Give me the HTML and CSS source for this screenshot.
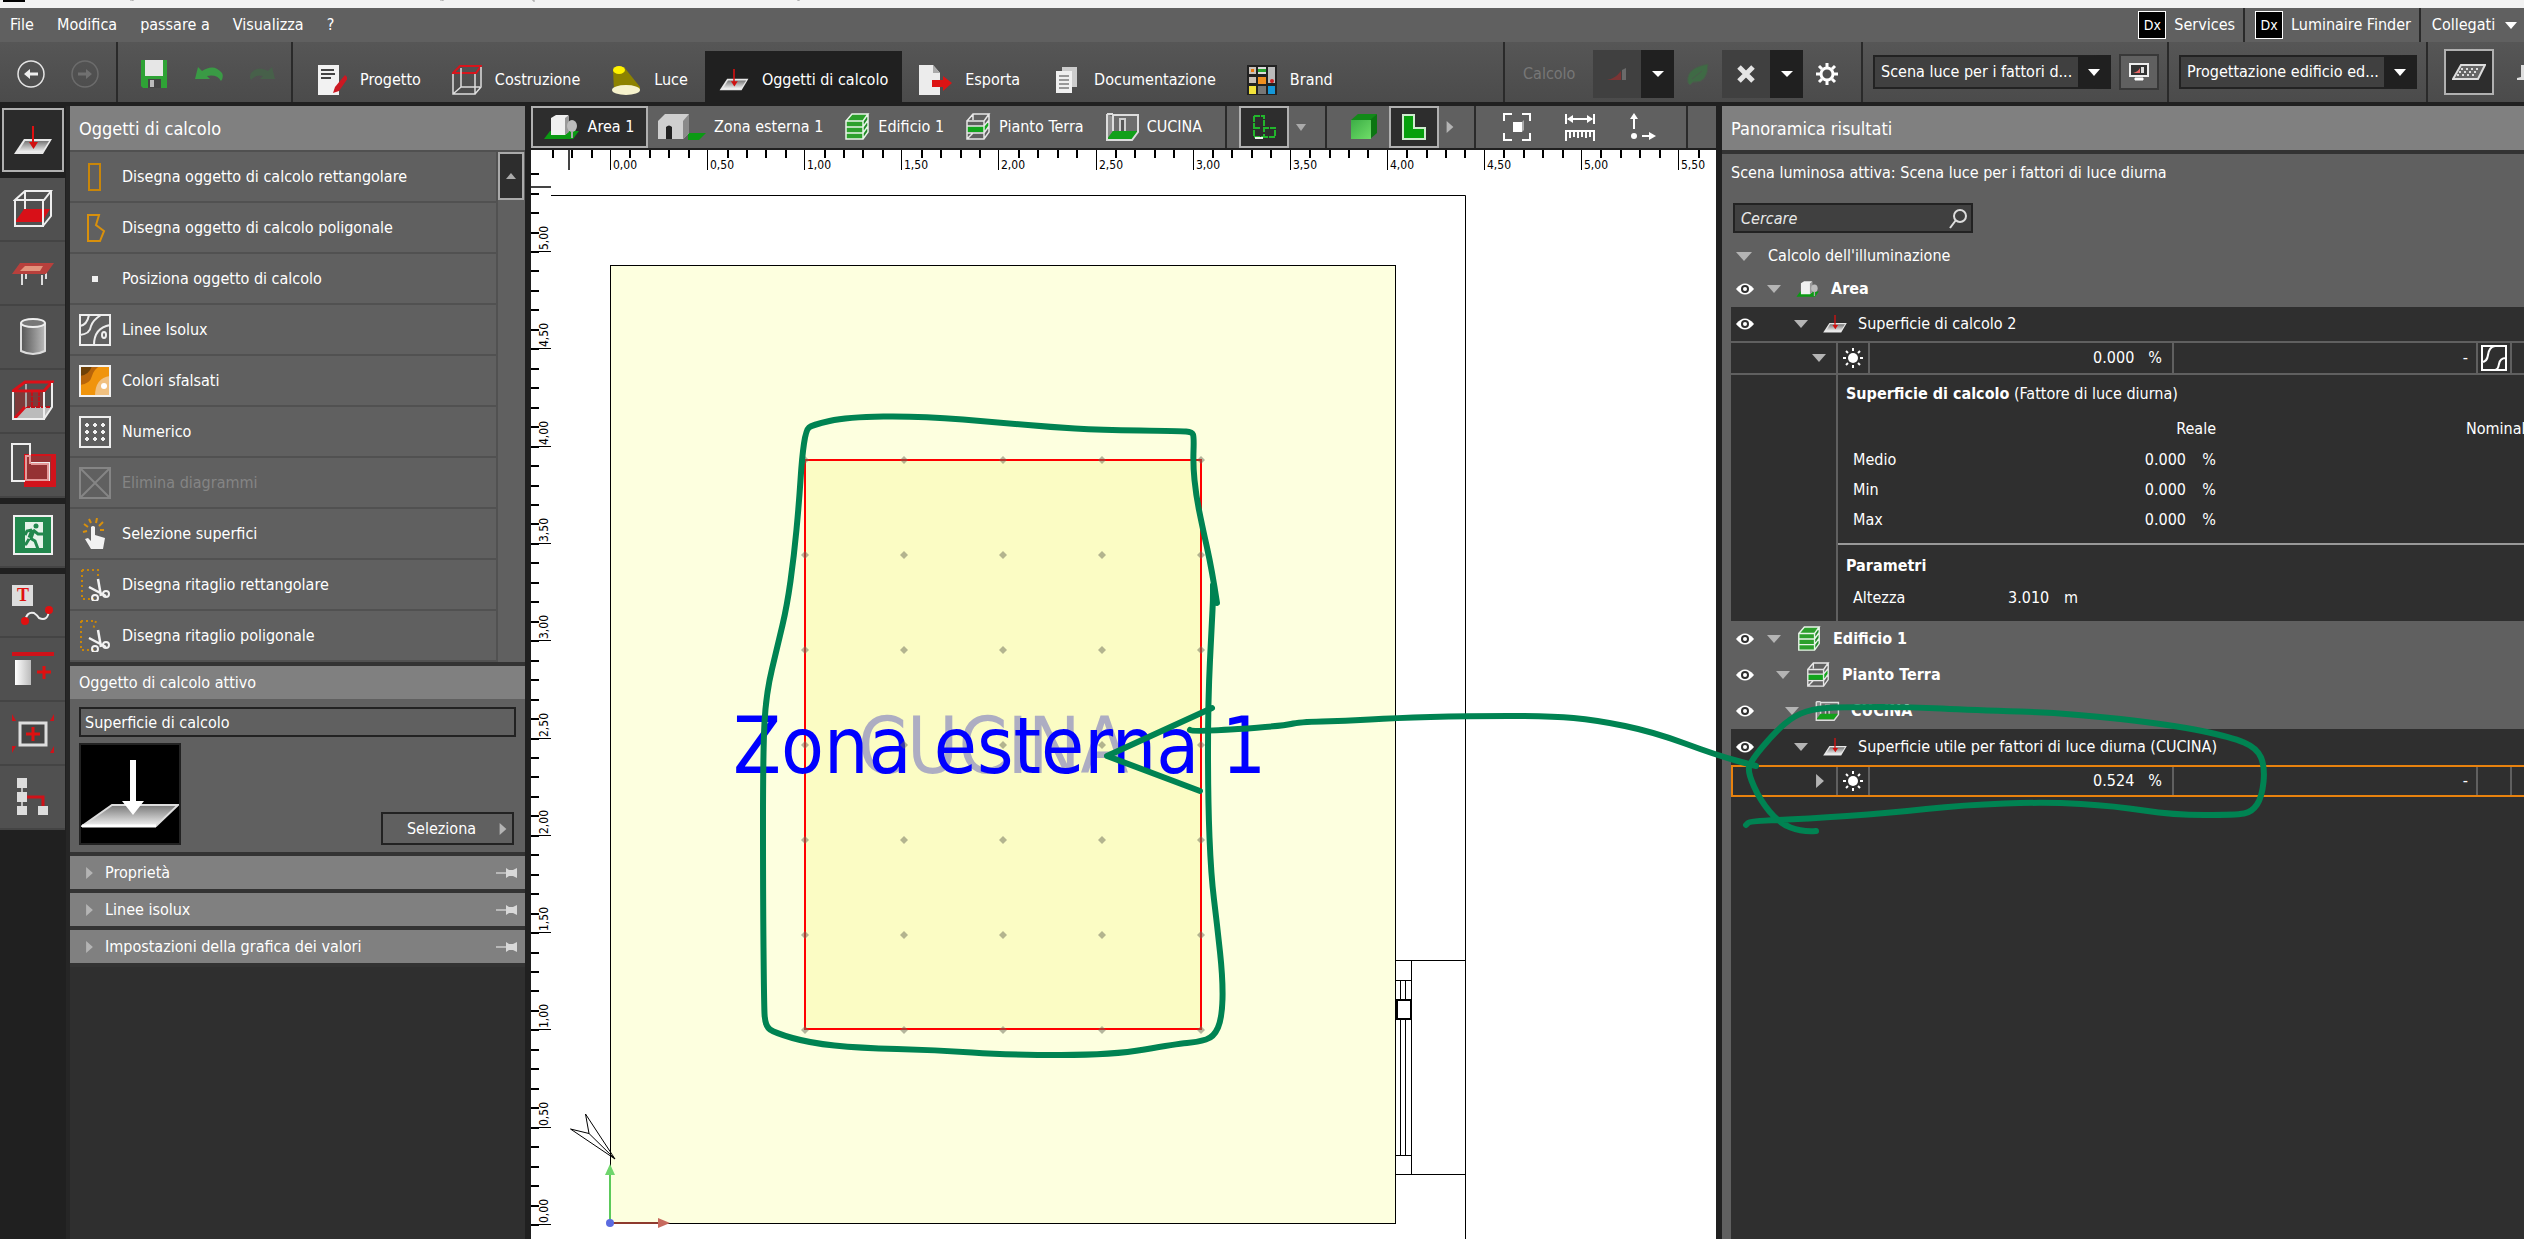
FILE: index.html
```html
<!DOCTYPE html>
<html lang="it">
<head>
<meta charset="utf-8">
<title>Oggetti di calcolo</title>
<link rel="stylesheet" href="styles.css">
</head>
<body>
<svg class="defs" aria-hidden="true">
  <defs>
    <linearGradient id="gPlate" x1="0" y1="0" x2="0" y2="1"><stop offset="0" stop-color="#777"/><stop offset="1" stop-color="#f2f2f2"/></linearGradient>
    <linearGradient id="gLight" x1="0" y1="0" x2="1" y2="0"><stop offset="0" stop-color="#fff"/><stop offset="1" stop-color="#bbb"/></linearGradient>
    <linearGradient id="gCyl" x1="0" y1="0" x2="1" y2="0"><stop offset="0" stop-color="#555"/><stop offset="1" stop-color="#bbb"/></linearGradient>
    <linearGradient id="gGreen" x1="0" y1="0" x2="1" y2="1"><stop offset="0" stop-color="#3cae46"/><stop offset="1" stop-color="#6fdd68"/></linearGradient>
    <symbol id="plate" viewBox="0 0 38 29"><path d="M10 13h28l-9 15H0z" fill="#e8e8e8"/><path d="M11 15h24l-7 11H4z" fill="url(#gPlate)"/><path d="M19 0v18" stroke="#e01010" stroke-width="2"/><path d="M15 16h9l-4.500 7z" fill="#d01010"/></symbol>
    <symbol id="floors" viewBox="0 0 26 28"><path d="M2 8l6-7h16l-5 7v18H2z" fill="#2ca02c"/><path d="M19 8l5-7v18l-5 7z" fill="#1f8a26"/><path d="M2 8l6-7h16l-5 7H2v18h17l5-7V1M19 8v18M2 14h17l5-7M2 20h17l5-7" fill="none" stroke="#e8f4e8" stroke-width="1.500"/></symbol>
    <symbol id="floor" viewBox="0 0 26 28"><path d="M2 13h17l5-6v6l-5 6H2z" fill="#12a51c"/><path d="M2 8l6-7h16l-5 7H2v18h17l5-7V1M19 8v18M2 13h17l5-6M2 20h17l5-7M8 1v6M2 26l6-6" fill="none" stroke="#e6e6e6" stroke-width="1.500"/></symbol>
    <symbol id="room" viewBox="0 0 34 28"><path d="M8 3h25v16H8z" fill="#6d6d6d"/><path d="M2 1l6 3v15l-6 7z" fill="#8e8e8e"/><path d="M14 5h7v14h-7z" fill="#cfcfcf"/><path d="M16 7h3v12h-3z" fill="#555"/><path d="M8 18h25l-6 8H2z" fill="#12a01a"/><path d="M2 1v26h25l6-8V2H8v16M2 1h6" fill="none" stroke="#ddd" stroke-width="2"/></symbol>
    <symbol id="site" viewBox="0 0 36 28"><path d="M6 18h29l-6 8H0z" fill="#0b9a13"/><path d="M7 5l5-3h12v17l-3 3H7z" fill="#f0f0f0"/><path d="M21 5l4-3v17l-4 3z" fill="#999"/><ellipse cx="28" cy="13" rx="5" ry="6" fill="#bcbcbc"/><path d="M28 18v7" stroke="#aaa" stroke-width="2"/></symbol>
    <symbol id="eye" viewBox="0 0 18 12"><path d="M0 6Q9-5 18 6Q9 17 0 6z" fill="#fff"/><circle cx="9" cy="6" r="4" fill="#2f2f2f"/><circle cx="9" cy="6" r="2" fill="#fff"/></symbol>
    <symbol id="down" viewBox="0 0 16 9"><path d="M0 0h16l-8 9z" fill="#b4b4b4"/></symbol>
    <symbol id="right" viewBox="0 0 9 16"><path d="M0 0v16l9-8z" fill="#b4b4b4"/></symbol>
    <symbol id="sun" viewBox="0 0 20 20"><circle cx="10" cy="10" r="5" fill="#fff"/><path d="M10 0v3M10 17v3M0 10h3M17 10h3M3 3l2 2M15 15l2 2M17 3l-2 2M5 15l-2 2" stroke="#fff" stroke-width="2"/></symbol>
    <symbol id="pin" viewBox="0 0 22 12"><path d="M0 6h10" stroke="#b8b8b8" stroke-width="2"/><path d="M10 1l3 2h4l4-2v10l-4-2h-4l-3 2z" fill="#d8d8d8"/></symbol>
    <symbol id="scissors" viewBox="0 0 24 26"><path d="M11 2l3 17M2 10l17 9" stroke="#f2f2f2" stroke-width="2.500"/><circle cx="8" cy="21" r="3" fill="none" stroke="#f2f2f2" stroke-width="2"/><circle cx="19" cy="17" r="3" fill="none" stroke="#f2f2f2" stroke-width="2"/></symbol>
  </defs>
</svg>

<div class="titlebar"><svg width="900" height="4"><path d="M3 0h22v2H3z" fill="#000"/><path d="M130 0h3v1M440 0h3v1M532 0h2v2M797 0h2v1" stroke="#999" fill="none"/></svg></div>

<header class="menubar">
  <nav class="menus"><button>File</button><button>Modifica</button><button>passare a</button><button>Visualizza</button><button>?</button></nav>
  <a class="service" href="#"><span class="dx">Dx</span>Services</a>
  <a class="service finder" href="#"><span class="dx">Dx</span>Luminaire Finder</a>
  <button class="account">Collegati <svg width="12" height="7"><path d="M0 0h12l-6 7z" fill="#fff"/></svg></button>
</header>

<div class="toolbar">
  <div class="group history">
    <button aria-label="Indietro"><svg width="28" height="28"><circle cx="14" cy="14" r="13" fill="none" stroke="#e4e4e4" stroke-width="1.500"/><path d="M7 14l6-5v3.500h8v3h-8V19z" fill="#eee"/></svg></button>
    <button aria-label="Avanti" disabled><svg width="28" height="28"><circle cx="14" cy="14" r="13" fill="none" stroke="#6c6c6c" stroke-width="1.500"/><path d="M21 14l-6-5v3.500H7v3h8V19z" fill="#707070"/></svg></button>
  </div>
  <div class="group edit">
    <button aria-label="Salva"><svg width="28" height="28"><path d="M1 0h26v28H3l-2-2z" fill="#2fa336"/><path d="M5 0h18v16H5z" fill="#e6e6e6"/><path d="M8 19h13v9H8z" fill="#444"/><path d="M10 20h4v7h-4z" fill="#bbb"/></svg></button>
    <button aria-label="Annulla"><svg width="30" height="18"><path d="M1 14L4 2l4 4q12-8 20 2 2 4-1 8-4-7-14-5l3 3z" fill="#3a9a45"/></svg></button>
    <button aria-label="Ripeti" disabled><svg width="26" height="18"><path d="M25 14L22 2l-4 4Q8 0 1 8q-2 4 0 7 5-6 12-4l-3 3z" fill="#47604a"/></svg></button>
  </div>
  <nav class="tabs">
    <button><svg width="30" height="30"><path d="M1 0h21v30H1z" fill="#f2f2f2"/><path d="M4 5h13M4 9h14M4 13h10" stroke="#444" stroke-width="2"/><path d="M28 10l3 3-9 13-6 2 2-6z" fill="#cc1822"/></svg>Progetto</button>
    <button><svg width="30" height="30"><path d="M1 8l7-7h21l-5 7z" fill="none" stroke="#d8141c" stroke-width="2"/><path d="M1 9v20h22V9M29 2v20l-6 7M9 3v19h19M1 29l8-7" fill="none" stroke="#ddd" stroke-width="1.500"/></svg>Costruzione</button>
    <button><svg width="30" height="30"><path d="M2 5l11-3 16 20v3H3z" fill="#8d8200"/><ellipse cx="8" cy="5" rx="6" ry="4" fill="#fff200"/><ellipse cx="15" cy="25" rx="14" ry="5" fill="#f6f2cc"/></svg>Luce</button>
    <button class="on"><svg width="30" height="22"><use href="#plate"/></svg>Oggetti di calcolo</button>
    <button><svg width="33" height="30"><path d="M0 0h14l7 8v22H0z" fill="#ececec"/><path d="M14 0v8h7z" fill="#aaa"/><path d="M13 15h11v-4l9 7-9 8v-4H13z" fill="#dd1414"/></svg>Esporta</button>
    <button><svg width="30" height="30"><path d="M11 2h15v20H11z" fill="#ccc"/><path d="M5 6h16v22H5z" fill="#f0f0f0"/><path d="M8 11h10M8 15h10M8 19h10M8 23h10" stroke="#999" stroke-width="2"/></svg>Documentazione</button>
    <button><svg width="30" height="30"><path d="M0 0h30v30H0z" fill="#222"/><path d="M2 2h7v7H2zM2 12h7v6H2z" fill="#c9c0b8"/><path d="M4 4h3v3H4z" fill="#e87a10"/><path d="M11 2h8v7h-8z" fill="#ddd"/><path d="M11 4h8v3h-8z" fill="#27a530"/><path d="M21 2h7v16h-7z" fill="#bbb"/><path d="M11 12h8v7h-8z" fill="#f09020"/><circle cx="25" cy="16" r="2" fill="#c22"/><path d="M2 21h7v8H2z" fill="#f2e23a"/><path d="M11 21h8v8h-8z" fill="#777"/><path d="M21 21h7v8h-7z" fill="#1597d8"/></svg>Brand</button>
  </nav>
  <div class="group calc">
    <span class="off">Calcolo</span>
    <div class="split"><button aria-label="Avvia calcolo" disabled><svg width="20" height="12"><path d="M0 12q8-1 14-9v9z" fill="#7c3434"/><path d="M15 2l4-2v12h-4z" fill="#6a6a6a"/></svg></button><button class="drop" aria-label="Opzioni di calcolo"><svg width="12" height="6"><path d="M0 0h12l-6 6z" fill="#fff"/></svg></button></div>
    <button class="plain leaf" aria-label="Energia"><svg width="22" height="22"><path d="M1 20Q-2 5 21 1q0 20-15 18l-3 3zM5 16l10-8" fill="#3f6a45" stroke="#4b5a4c"/></svg></button>
    <div class="split"><button aria-label="Elimina risultati"><svg width="20" height="20"><path d="M3 3l14 14M17 3L3 17" stroke="#e4e4e4" stroke-width="5"/></svg></button><button class="drop" aria-label="Opzioni di eliminazione"><svg width="12" height="6"><path d="M0 0h12l-6 6z" fill="#fff"/></svg></button></div>
    <button class="plain gear" aria-label="Impostazioni"><svg width="22" height="22"><circle cx="11" cy="11" r="6" fill="none" stroke="#fff" stroke-width="3"/><path d="M11 0v4M11 18v4M0 11h4M18 11h4M3 3l3 3M16 16l3 3M19 3l-3 3M6 16l-3 3" stroke="#fff" stroke-width="3"/></svg></button>
  </div>
  <div class="group scene">
    <div class="combo"><select aria-label="Scena luce"><option>Scena luce per i fattori d...</option></select><svg width="12" height="7"><path d="M0 0h12l-6 7z" fill="#fff"/></svg></div>
    <button class="monitor" aria-label="Mostra risultati"><svg width="20" height="18"><path d="M1 1h18v12H1z" fill="#333" stroke="#eee" stroke-width="2"/><path d="M6 15h8v2H6z" fill="#fff" stroke="#fff"/><path d="M4 10q5-1 7-5v5z" fill="#e66"/><path d="M12 4h3v6h-3z" fill="#ddd"/></svg></button>
  </div>
  <div class="group view">
    <div class="combo"><select aria-label="Modalità"><option>Progettazione edificio ed...</option></select><svg width="12" height="7"><path d="M0 0h12l-6 7z" fill="#fff"/></svg></div>
  </div>
  <div class="group panels">
    <button class="framed grid" aria-label="Griglia"><svg width="34" height="16"><path d="M9 1h24l-7 14H1z" fill="#666" stroke="#ddd" stroke-width="2"/><path d="M9 5h20M7 8h20M5 11h20" stroke="#ddd" stroke-width="2" stroke-dasharray="2 3"/></svg></button>
    <svg width="10" height="20"><path d="M4 3h6v15H0v-2l4-1z" fill="#ddd"/></svg>
  </div>
</div>

<main class="work">
  <aside class="rail">
    <button class="active" aria-label="Superficie di calcolo"><svg width="38" height="29"><use href="#plate"/></svg></button>
    <button class="after" aria-label="Locale"><svg width="40" height="40"><path d="M2 33l9-13h26l-8 13z" fill="#d81018"/><path d="M2 11l10-9h26l-7 9z M2 11v26h28V11M38 2v25l-8 10M12 2v18" fill="none" stroke="#eee" stroke-width="2"/></svg></button>
    <button aria-label="Mobili"><svg width="42" height="24"><path d="M10 12v12M30 14v10M14 12v6M34 8v10" stroke="#ddd" stroke-width="2"/><path d="M8 2h34l-8 11H0z" fill="#b8403c"/><path d="M13 5h18l-3 5H8z" fill="#e2937c"/></svg></button>
    <button aria-label="Colonne"><svg width="28" height="38"><path d="M2 5v28q12 6 24 0V5" fill="url(#gCyl)" stroke="#ddd" stroke-width="2"/><ellipse cx="14" cy="5" rx="12" ry="4" fill="#777" stroke="#eee" stroke-width="2"/></svg></button>
    <button aria-label="Volume"><svg width="42" height="42"><path d="M3 13h28v24H3z" fill="#7d3a3a"/><path d="M2 39l10-12h27l-7 12z" fill="#bbb"/><path d="M2 39l11-12" stroke="#d8101a" stroke-width="3"/><path d="M14 27h25M20 12v15M27 12v15" stroke="#c01018" stroke-width="2" stroke-dasharray="4 1"/><path d="M14 4v23" stroke="#aaa" stroke-width="2"/><path d="M1 11l12-9h27l-8 9z" fill="none" stroke="#dc1018" stroke-width="3"/><path d="M1 12v27h31V12M40 3v24l-8 12" fill="none" stroke="#eee" stroke-width="2"/></svg></button>
    <button aria-label="Zona"><svg width="46" height="46"><path d="M15 13h30v31H15z" fill="#953234" stroke="#d2131b" stroke-width="2"/><path d="M2 2h18v19h19v18H2z" fill="none" stroke="#eee" stroke-width="2"/><path d="M21 22h17v16H16V14h4v8" fill="none" stroke="#e59a9a" stroke-width="2"/><path d="M15 39h30v5H15zM41 13h4v31h-4z" fill="#d2131b"/></svg></button>
    <button class="after" aria-label="Emergenza"><svg width="40" height="40"><path d="M1 1h38v38H1z" fill="#22884e" stroke="#f0f0f0" stroke-width="2"/><path d="M12 7h18v26H12z" fill="#e6f3ea"/><circle cx="23" cy="11" r="2.500" fill="#22884e"/><path d="M20 15l-3 8" stroke="#22884e" stroke-width="5"/><path d="M17 23l5 3 3 8M16 24l-3 5H7M20 15l5 4h5M19 15l-5 1-2 4" fill="none" stroke="#22884e" stroke-width="3"/></svg></button>
    <button class="after" aria-label="Testo"><svg width="42" height="40"><path d="M0 0h21v21H0z" fill="#ddd"/><text x="5" y="16" class="glyph">T</text><path d="M13 36q2-10 9-8 3 2 5 5 9 4 10-8" fill="none" stroke="#eee" stroke-width="2"/><circle cx="13" cy="36" r="4" fill="#e01010"/><circle cx="37" cy="25" r="4" fill="#e01010"/></svg></button>
    <button aria-label="Altezza"><svg width="42" height="34"><path d="M0 2h42" stroke="#cf1219" stroke-width="4"/><path d="M3 8h16v25H3z" fill="url(#gLight)"/><path d="M32 14v13M25 20h14" stroke="#e01010" stroke-width="3"/></svg></button>
    <button aria-label="Apertura"><svg width="42" height="40"><path d="M8 10h26v22H8z" fill="#444" stroke="#ddd" stroke-width="3"/><path d="M21 14v14M14 21h14" stroke="#e01010" stroke-width="3"/><path d="M0 1l4 7H0zM42 1v7h-4zM0 40v-7h4zM42 40h-4l4-7z" fill="#cf1219"/></svg></button>
    <button aria-label="Struttura"><svg width="32" height="38"><path d="M5 4v30" stroke="#bbb" stroke-width="2"/><path d="M8 19h18v12" fill="none" stroke="#cf1219" stroke-width="3"/><path d="M0 0h10v10H0zM0 14h10v10H0zM0 28h10v9H0zM21 28h10v9H21z" fill="#ddd"/></svg></button>
  </aside>

  <section class="tools">
    <h2>Oggetti di calcolo</h2>
    <div class="toollist">
      <ul>
        <li><button><svg width="32" height="32"><path d="M10 3h11v26H10z" fill="none" stroke="#c8860a" stroke-width="2"/></svg>Disegna oggetto di calcolo rettangolare</button></li>
        <li><button><svg width="32" height="32"><path d="M9 3h11l-3 10 8 6-4 10H9z" fill="none" stroke="#d8900c" stroke-width="2"/></svg>Disegna oggetto di calcolo poligonale</button></li>
        <li><button><svg width="32" height="32"><path d="M13 13h6v6h-6z" fill="#f0f0f0"/></svg>Posiziona oggetto di calcolo</button></li>
        <li><button><svg width="32" height="32"><path d="M1 1h30v30H1zM1 12Q8 11 10 1M1 21Q11 20 12 12Q14 6 22 1M15 31Q15 14 31 11" fill="none" stroke="#eee" stroke-width="2"/><ellipse cx="25" cy="21" rx="2" ry="3" fill="none" stroke="#eee" stroke-width="2"/></svg>Linee Isolux</button></li>
        <li><button><svg width="32" height="32"><path d="M1 1h30v30H1z" fill="#f0940c"/><path d="M1 1h20Q15 4 13 11Q11 19 1 20z" fill="#b8650a"/><path d="M1 1h12Q10 10 1 11z" fill="#6e4108"/><path d="M16 31Q16 13 31 11v20z" fill="#f0c080"/><circle cx="25" cy="21" r="3" fill="#fff"/><path d="M1 1h30v30H1z" fill="none" stroke="#f2f2f2" stroke-width="2"/></svg>Colori sfalsati</button></li>
        <li><button><svg width="32" height="32"><path d="M1 1h30v30H1z" fill="none" stroke="#eee" stroke-width="2"/><path d="M6 9h4M14 9h4M22 9h4M6 16h4M14 16h4M22 16h4M6 23h4M14 23h4M22 23h4M8 7v4M16 7v4M24 7v4M8 14v4M16 14v4M24 14v4M8 21v4M16 21v4M24 21v4" stroke="#f2f2f2" stroke-width="2"/></svg>Numerico</button></li>
        <li><button disabled><svg width="32" height="32"><path d="M1 1h30v30H1zM1 1l30 30M31 1L1 31" fill="none" stroke="#858585" stroke-width="2"/></svg>Elimina diagrammi</button></li>
        <li><button><svg width="32" height="32"><path d="M12 9q2-2 4 0v8l10 3-2 11H12l-6-10 3-1 3 3z" fill="#f2f2f2"/><path d="M4 14l4-1M5 6l4 3M10 1l2 4M18 0l-1 5M24 4l-4 4M21 12h4" stroke="#d8900c" stroke-width="2"/></svg>Selezione superfici</button></li>
        <li><button><svg width="32" height="32"><path d="M3 1h16v8M3 1v29h12" fill="none" stroke="#c8860a" stroke-width="2" stroke-dasharray="2 3"/><use href="#scissors" x="8" y="8" width="24" height="26"/></svg>Disegna ritaglio rettangolare</button></li>
        <li><button><svg width="32" height="32"><path d="M2 1h15l-3 8M2 1v29h14" fill="none" stroke="#c8860a" stroke-width="2" stroke-dasharray="2 3"/><use href="#scissors" x="8" y="8" width="24" height="26"/></svg>Disegna ritaglio poligonale</button></li>
      </ul>
      <div class="scroll"><button aria-label="Scorri in alto"><svg width="10" height="6"><path d="M5 0l5 6H0z" fill="#aaa"/></svg></button></div>
    </div>

    <h3>Oggetto di calcolo attivo</h3>
    <div class="current">
      <input type="text" value="Superficie di calcolo" aria-label="Oggetto di calcolo attivo">
      <div class="pick">
        <svg class="preview" width="102" height="102"><path d="M0 0h102v102H0z" fill="#000"/><path d="M33 62h66L77 83H3z" fill="url(#gPlate)" stroke="#ddd" stroke-width="2"/><path d="M3 83h74" stroke="#fff" stroke-width="3"/><path d="M51 17h6v41h8L54 72 43 58h8z" fill="#fff"/></svg>
        <button class="choose"><span>Seleziona</span><svg width="8" height="12"><use href="#right"/></svg></button>
      </div>
    </div>
    <button class="fold"><svg width="7" height="12"><use href="#right"/></svg><span>Proprietà</span><svg width="22" height="12"><use href="#pin"/></svg></button>
    <button class="fold"><svg width="7" height="12"><use href="#right"/></svg><span>Linee isolux</span><svg width="22" height="12"><use href="#pin"/></svg></button>
    <button class="fold"><svg width="7" height="12"><use href="#right"/></svg><span>Impostazioni della grafica dei valori</span><svg width="22" height="12"><use href="#pin"/></svg></button>
  </section>

  <section class="plan">
    <div class="crumbs">
      <button class="framed here"><svg width="36" height="28"><use href="#site"/></svg>Area 1</button>
      <button><svg width="48" height="28"><path d="M30 20h18l-7 7H30z" fill="#0b9a13"/><path d="M0 8l7-7h24v19l-6 6H0z" fill="#cfcfcf"/><path d="M25 8l6-7v19l-6 6z" fill="#8a8a8a"/><path d="M8 26V14q3-3 6 0v12z" fill="#222"/></svg>Zona esterna 1</button>
      <button><svg width="26" height="28"><use href="#floors"/></svg>Edificio 1</button>
      <button><svg width="26" height="28"><use href="#floor"/></svg>Pianto Terra</button>
      <button><svg width="34" height="28"><use href="#room"/></svg>CUCINA</button>
      <i class="sep"></i>
      <button class="framed tile" aria-label="Pianta"><svg width="24" height="24"><path d="M2 1h10v12h11v9H12M2 1v21h10v-4M2 13h6M12 13v4" fill="none" stroke="#22b52c" stroke-width="2" stroke-dasharray="6 1"/><path d="M3 23h8" stroke="#eee" stroke-width="2"/></svg></button>
      <svg class="tri" width="10" height="7"><path d="M0 0h10l-5 7z" fill="#aaa"/></svg>
      <i class="sep"></i>
      <button class="cube" aria-label="Vista 3D"><svg width="28" height="28"><path d="M1 7l7-6h19l-6 6z" fill="#128a18"/><path d="M20 7l7-6v19l-7 6z" fill="#0c7512"/><path d="M1 7h20v19H1z" fill="url(#gGreen)"/></svg></button>
      <button class="framed tile" aria-label="Vista in pianta"><svg width="26" height="26"><path d="M2 1h11v13h11v11H2z" fill="#06a00d" stroke="#cfeccf" stroke-width="2"/></svg></button>
      <svg class="tri" width="8" height="12"><use href="#right"/></svg>
      <i class="sep late"></i>
      <button class="tool" aria-label="Adatta alla finestra"><svg width="28" height="28"><path d="M1 8V1h8M19 1h8v7M27 20v7h-8M9 27H1v-7" fill="none" stroke="#fff" stroke-width="2"/><path d="M10 9h9v10h-9z" fill="#fff"/><path d="M19 9l2-2v10l-2 2z" fill="#aaa"/></svg></button>
      <button class="tool" aria-label="Misura"><svg width="30" height="28"><path d="M1 1v10M29 1v10M3 6h24M1 28V18h28v10M5 18v7M9 18v6M13 18v7M17 18v6M21 18v7M25 18v6" fill="none" stroke="#fff" stroke-width="2"/><path d="M2 6l6-4v8zM28 6l-6-4v8z" fill="#fff"/></svg></button>
      <button class="tool" aria-label="Origine"><svg width="28" height="28"><path d="M5 4v12M13 23h8" stroke="#fff" stroke-width="2"/><path d="M5 0l4 6H1zM27 23l-7-4v8z" fill="#fff"/><circle cx="5" cy="23" r="3" fill="#fff"/></svg></button>
      <i class="sep"></i>
    </div>
    <svg class="drawing" role="img" aria-label="Pianta della cucina">
      <g transform="translate(-531 -150)">
        <rect x="610.500" y="265.500" width="785" height="958" class="roomfill"/>
        <path d="M551 195.500H1465.500V1260M1395 960.500H1465M1395 1174.500H1465M1411.500 960V1174M1395 980.500H1411M1395 1155.500H1411M1400.500 980V1155M1405.500 980V1155" class="wall"/>
        <rect x="1397" y="1000" width="14" height="19" class="handle"/>
        <rect x="805" y="460" width="396" height="569" class="area"/>
        <text x="858" y="773" class="label soft">CUCINA</text>
        <text x="733" y="773" class="label zone">Zona esterna 1</text>
        <g id="points" class="points"></g>
        <path d="M585.500 1114L615 1159L570.500 1129L589 1133.500zM589 1133.500L615 1159" class="wall"/>
        <path d="M610 1222V1172" stroke="#5cc95a" stroke-width="2"/><path d="M610 1164l5 11h-10z" fill="#6fd56c"/>
        <path d="M612 1223H660" stroke="#8e3a2e" stroke-width="2"/><path d="M670 1223l-12-5v10z" fill="#c76a5e"/>
        <circle cx="610" cy="1223" r="4" fill="#5b6be0"/>
        <g id="ruler" class="ruler"></g>
      </g>
    </svg>
  </section>

  <section class="results">
    <h2>Panoramica risultati</h2>
    <div class="intro">
      <p>Scena luminosa attiva: Scena luce per i fattori di luce diurna</p>
      <div class="search"><input type="text" placeholder="Cercare" aria-label="Cercare"><svg width="18" height="20"><circle cx="11" cy="7" r="6" fill="none" stroke="#ddd" stroke-width="2"/><path d="M7 11l-6 8" stroke="#ddd" stroke-width="2"/></svg></div>
    </div>
    <div class="tree">
      <div class="node group0"><svg width="16" height="9"><use href="#down"/></svg>Calcolo dell'illuminazione</div>
      <div class="node bold short"><svg class="eye" width="18" height="12"><use href="#eye"/></svg><svg class="lv1" width="14" height="8"><use href="#down"/></svg><svg class="ic" width="24" height="18"><use href="#site"/></svg>Area</div>
      <div class="node dark"><svg class="eye" width="18" height="12"><use href="#eye"/></svg><svg class="lv4" width="14" height="8"><use href="#down"/></svg><svg class="ic" width="24" height="18"><use href="#plate"/></svg>Superficie di calcolo 2</div>
      <div class="value">
        <span class="lead"><svg width="14" height="8"><use href="#down"/></svg></span><span class="sun"><svg width="20" height="20"><use href="#sun"/></svg></span>
        <span class="num">0.000 <b>%</b></span><span class="dash">-</span>
        <span class="thumb"><svg width="26" height="26"><path d="M1 1h24v24H1zM1 17q5 0 6-7 1-8 7-9M14 25q3 0 4-6 1-6 7-6" fill="none" stroke="#fff" stroke-width="2"/></svg></span>
      </div>
      <div class="detail">
        <div class="sheet">
          <p class="head"><b>Superficie di calcolo</b> (Fattore di luce diurna)</p>
          <table class="stats">
            <colgroup><col class="c1"><col class="c2"><col class="c3"><col></colgroup>
            <thead><tr><td></td><th colspan="2" class="rh">Reale</th><th class="nh">Nominale</th></tr></thead>
            <tbody>
              <tr><th>Medio</th><td>0.000</td><td class="u">%</td><td></td></tr>
              <tr><th>Min</th><td>0.000</td><td class="u">%</td><td></td></tr>
              <tr><th>Max</th><td>0.000</td><td class="u">%</td><td></td></tr>
            </tbody>
          </table>
          <p class="par"><b>Parametri</b></p>
          <p class="alt"><span>Altezza</span><span>3.010</span><span>m</span></p>
        </div>
      </div>
      <div class="node bold"><svg class="eye" width="18" height="12"><use href="#eye"/></svg><svg class="lv1" width="14" height="8"><use href="#down"/></svg><svg class="ic" width="26" height="26"><use href="#floors"/></svg>Edificio 1</div>
      <div class="node bold"><svg class="eye" width="18" height="12"><use href="#eye"/></svg><svg class="lv2" width="14" height="8"><use href="#down"/></svg><svg class="ic" width="26" height="26"><use href="#floor"/></svg>Pianto Terra</div>
      <div class="node bold"><svg class="eye" width="18" height="12"><use href="#eye"/></svg><svg class="lv3" width="14" height="8"><use href="#down"/></svg><svg class="ic" width="26" height="20"><use href="#room"/></svg>CUCINA</div>
      <div class="node dark tall"><svg class="eye" width="18" height="12"><use href="#eye"/></svg><svg class="lv4" width="14" height="8"><use href="#down"/></svg><svg class="ic" width="24" height="18"><use href="#plate"/></svg>Superficie utile per fattori di luce diurna (CUCINA)</div>
      <div class="value picked">
        <span class="lead"><svg width="8" height="14"><use href="#right"/></svg></span><span class="sun"><svg width="20" height="20"><use href="#sun"/></svg></span>
        <span class="num">0.524 <b>%</b></span><span class="dash">-</span><span class="thumb"></span>
      </div>
      <div class="rest"></div>
    </div>
  </section>
</main>

<svg class="notes" aria-hidden="true"><g id="notes"></g></svg>
<script src="plan.js"></script>
</body>
</html>
```

FILE: styles.css
```css
* { box-sizing: border-box; }
html, body { height: 100%; }
body {
  margin: 0;
  display: flex;
  flex-direction: column;
  overflow: hidden;
  position: relative;
  background: #202020;
  color: #fff;
  font: 16px/20px "DejaVu Sans Condensed", "Noto Sans", sans-serif;
}
button, input, select { font: inherit; color: inherit; }
button { background: none; border: 0; padding: 0; display: flex; align-items: center; justify-content: center; white-space: nowrap; }
svg { flex: none; display: block; }
h2, h3, p, ul { margin: 0; padding: 0; font-weight: 400; }
.defs { position: absolute; width: 0; height: 0; }

.titlebar { height: 8px; flex: none; background: #f2f2f2; }

.menubar { height: 34px; flex: none; display: flex; background: #606060; overflow: hidden; }
.menus { flex: 1; display: flex; gap: 23px; padding-left: 10px; }
.service { display: flex; align-items: center; gap: 8px; padding: 0 8px 0 11px; color: #fff; text-decoration: none; white-space: nowrap; border-right: 2px solid #2a2a2a; }
.finder { padding-left: 10px; }
.dx { width: 28px; height: 28px; border: 1px solid #fff; background: #000; font-size: 14px; line-height: 26px; text-align: center; }
.account { gap: 10px; width: 103px; padding-left: 4px; }

.toolbar { height: 64px; flex: none; display: flex; background: linear-gradient(#565656, #4b4b4b); border-bottom: 4px solid #202020; overflow: hidden; }
.group { display: flex; align-items: center; flex: none; border-left: 2px solid #2a2a2a; padding-bottom: 0; }
.group.history { border-left: 0; width: 116px; padding: 4px 0 0 17px; gap: 26px; }
.edit { width: 175px; padding: 4px 0 0 22px; gap: 26px; }
.tabs { flex: 1; min-width: 0; display: flex; align-items: flex-end; gap: 3px; padding-left: 10px; border-left: 2px solid #2a2a2a; }
.tabs button { height: 51px; padding: 6px 14px 0; gap: 13px; }
.tabs .on { background: #202020; }
.calc { width: 358px; padding: 4px 0 0 18px; }
.off { color: #777; width: 70px; }
.split { display: flex; height: 48px; }
.split button { width: 48px; background: #404040; }
.split .drop { width: 33px; background: #202020; }
.leaf { width: 48px; }
.gear { width: 48px; }
.scene { width: 306px; padding-left: 10px; gap: 8px; }
.view { width: 259px; padding-left: 10px; }
.combo { position: relative; width: 238px; height: 34px; }
.combo select { appearance: none; width: 100%; height: 100%; margin: 0; padding: 0 0 0 6px; border: 2px solid #222; border-right: 33px solid #202020; border-radius: 0; background: #404040; }
.combo svg { position: absolute; right: 11px; top: 14px; pointer-events: none; }
.monitor { width: 40px; height: 36px; background: #606060; border: 2px solid #383838; }
.panels { width: 98px; padding-left: 16px; gap: 23px; overflow: hidden; }
.framed { border: 2px solid #b0b0b0; background: #2d2d2d; }
.grid { width: 50px; height: 46px; flex: none; }

.work { flex: 1; display: flex; min-height: 0; }
.rail { width: 66px; flex: none; padding-top: 2px; }
.rail button { width: 65px; height: 64px; background: #505050; border-bottom: 2px solid #444; }
.rail .active { width: 62px; margin-left: 2px; background: #2b2b2b; border: 2px solid #b0b0b0; }
.rail .after { border-top: 6px solid #202020; height: 70px; }
.glyph { font: bold 18px "Liberation Serif", serif; fill: #e01010; }

.tools { width: 459px; flex: none; border-left: 4px solid #262626; background: #2f2f2f; }
.tools h2, .results h2 { height: 44px; padding-left: 9px; background: #808080; font-size: 18px; line-height: 46px; }
.toollist { display: flex; background: #606060; border-top: 2px solid #505050; border-bottom: 4px solid #333; }
.toollist ul { flex: 1; list-style: none; border-right: 2px solid #515151; }
.toollist li button { width: 100%; height: 51px; padding-left: 9px; gap: 11px; justify-content: flex-start; border-bottom: 2px solid #515151; }
.toollist button:disabled { color: #858585; }
.scroll { width: 27px; }
.scroll button { width: 26px; height: 48px; background: #2d2d2d; border: 2px solid #aaa; }
.tools h3 { height: 33px; padding-left: 9px; background: #808080; font-size: 16px; line-height: 34px; }
.current { height: 157px; padding: 8px 9px; background: #606060; border-bottom: 4px solid #333; }
.current input { width: 100%; height: 30px; padding: 0 4px; background: #606060; border: 2px solid #222; }
.pick { display: flex; justify-content: space-between; align-items: flex-end; padding-top: 6px; }
.preview { outline: 2px solid #222; outline-offset: -2px; }
.choose { width: 133px; height: 33px; margin-right: 2px; border: 2px solid #222; }
.choose span { width: 96px; text-align: center; padding-left: 10px; }
.choose svg { margin-left: 14px; }
.fold { width: 100%; height: 37px; padding: 0 7px 0 16px; gap: 12px; background: #808080; border-bottom: 4px solid #333; }
.fold span { flex: 1; text-align: left; }

.plan { flex: 1; min-width: 0; display: flex; flex-direction: column; border-left: 6px solid #202020; border-right: 6px solid #202020; }
.crumbs { height: 44px; flex: none; display: flex; align-items: stretch; background: #606060; border-bottom: 2px solid #202020; overflow: hidden; }
.crumbs button { flex: none; gap: 8px; padding: 0 11px 0 10px; }
.crumbs .here { width: 117px; }
.sep { width: 2px; flex: none; background: #2a2a2a; margin: 0 12px; }
.crumbs .tile { width: 50px; padding: 0; }
.tri { align-self: center; margin-left: 7px; margin-right: 7px; }
.crumbs .cube { padding: 0 11px; }
.sep.late { margin: 0 10px 0 13px; }
.crumbs .tool { padding: 0 17px; }
.drawing { flex: 1; width: 100%; min-height: 0; background: #fff; }
.roomfill { fill: #fdffdf; stroke: #000; }
.wall { fill: none; stroke: #000; }
.handle { fill: #fff; stroke: #000; stroke-width: 2px; }
.area { fill: #fbfcc4; stroke: #f00; stroke-width: 2px; }
.label { font-size: 78px; }
.soft { fill: #adadc2; }
.zone { fill: #00f; }
.points { fill: #6b6b5a; fill-opacity: 0.5; }
.ruler { fill: #000; font-size: 12px; }
.ruler .now { fill: #444; }

.results { width: 802px; flex: none; display: flex; flex-direction: column; background: #606060; overflow: hidden; }
.results h2 { flex: none; }
.intro { height: 87px; flex: none; padding: 9px 0 0 9px; border-top: 4px solid #333; }
.search { position: relative; width: 240px; height: 30px; margin: 20px 0 0 2px; }
.search input { width: 100%; height: 100%; padding: 0 6px; background: #404040; border: 2px solid #222; font-style: italic; }
.search input::placeholder { color: #e8e8e8; opacity: 1; }
.search svg { position: absolute; right: 6px; top: 6px; }
.tree { flex: 1; display: flex; flex-direction: column; margin-left: 9px; width: 860px; }
.node { display: flex; align-items: center; flex: none; height: 36px; padding-left: 5px; white-space: nowrap; }
.bold { font-weight: 700; }
.group0 { height: 33px; gap: 16px; padding-top: 5px; }
.short { height: 37px; }
.dark { height: 34px; background: #2f2f2f; }
.tall { height: 36px; }
.lv1 { margin-left: 13px; }
.lv2 { margin-left: 22px; }
.lv3 { margin-left: 31px; }
.lv4 { margin-left: 40px; }
.ic { margin: 0 11px 0 15px; }
.value { display: flex; flex: none; height: 34px; background: #2f2f2f; border: 2px solid #606060; border-left: 0; }
.value > span { display: flex; align-items: center; justify-content: flex-end; border-right: 2px solid #606060; }
.value .lead { width: 107px; padding-right: 10px; }
.value .sun { width: 32px; justify-content: center; }
.value .num { width: 304px; padding-right: 10px; gap: 14px; }
.value b { font-weight: 400; }
.value .dash { width: 304px; padding-right: 8px; }
.value .thumb { width: 34px; justify-content: center; }
.picked { height: 32px; border: 2px solid #e8820e; }
.picked .lead { width: 105px; padding-right: 12px; }
.detail { height: 246px; flex: none; background: #2f2f2f; }
.sheet { height: 100%; margin-left: 105px; border-left: 2px solid #606060; }
.head { padding: 9px 0 9px 8px; }
.stats { width: 753px; border-collapse: collapse; table-layout: fixed; }
.stats th, .stats td { height: 30px; padding: 0; font-weight: 400; text-align: right; }
.stats tbody th { padding-left: 15px; text-align: left; }
.stats thead th { height: 32px; }
.stats .nh { padding-left: 250px; text-align: left; }
.c1 { width: 150px; }
.c2 { width: 198px; }
.c3 { width: 30px; }
.par { margin-top: 8px; padding: 11px 0 0 8px; border-top: 2px solid #999; }
.alt { display: flex; align-items: center; height: 44px; padding-left: 15px; }
.alt span:nth-child(1) { width: 155px; }
.alt span:nth-child(2) { width: 56px; }
.rest { flex: 1; background: #2f2f2f; }

.notes { position: absolute; inset: 0; width: 100%; height: 100%; pointer-events: none; fill: none; stroke: #008352; stroke-width: 6px; stroke-linecap: round; stroke-linejoin: round; }
```

FILE: plan.js
```js
const NS = "http://www.w3.org/2000/svg";

function add(parent, name, attrs, text) {
  const node = document.createElementNS(NS, name);
  for (const key in attrs) node.setAttribute(key, attrs[key]);
  if (text) node.textContent = text;
  parent.appendChild(node);
}

// Rulers: one tick every 0.1 m, a labelled one every 0.5 m.
const ruler = document.getElementById("ruler");
const format = (n) => (n / 10).toFixed(2).replace(".", ",");
for (let n = -3; n <= 56; n++) {
  const x = Math.round(610 + n * 19.42);
  const major = n >= 0 && n % 5 === 0;
  add(ruler, "rect", { x, y: 150, width: major ? 1 : 2, height: major ? 20 : 8 });
  if (major) add(ruler, "text", { x: x + 3, y: 169 }, format(n));
}
for (let n = 0; n <= 54; n++) {
  const y = Math.round(1224 - n * 19.46);
  const major = n % 5 === 0;
  add(ruler, "rect", { x: 531, y, width: 8, height: 2 });
  if (major) {
    add(ruler, "rect", { x: 539, y, width: 12, height: 1 });
    add(ruler, "text", { transform: `translate(548 ${y - 1}) rotate(-90)` }, format(n));
  }
}
add(ruler, "rect", { x: 568, y: 150, width: 2, height: 20, class: "now" });
add(ruler, "rect", { x: 531, y: 186, width: 20, height: 2, class: "now" });

// Calculation points.
const points = document.getElementById("points");
for (let c = 0; c < 5; c++) {
  for (let r = 0; r < 7; r++) {
    add(points, "path", { d: `M${805 + c * 99} ${456 + r * 95}l4 4-4 4-4-4z` });
  }
}

// Freehand notes: each list of points is joined through its midpoints.
const strokes = [
  [[1217,603],[1212,570],[1202,525],[1196,495],[1193,465],[1194,437],[1192,432],[1180,431],[1100,430],[1050,427],[1006,423],[920,416],[847,417],[812,425],[806,430],[802,457],[799,503],[794,556],[787,606],[778,644],[766,694],[763,751],[763,894],[764,1001],[765,1026],[775,1033],[810,1043],[859,1048],[935,1050],[1009,1055],[1113,1055],[1176,1044],[1198,1042],[1214,1037],[1222,1018],[1223,980],[1217,924],[1211,875],[1208,800],[1208,700],[1212,620],[1213,600],[1213,585]],
  [[1190,730],[1193,732],[1283,726],[1299,722],[1345,721],[1395,718],[1466,716],[1551,716],[1596,720],[1654,732],[1716,755],[1756,766]],
  [[1816,831],[1802,832],[1779,823],[1760,800],[1748,773],[1750,762],[1774,733],[1795,715],[1818,708],[1852,707],[1910,707],[1973,710],[2068,713],[2173,725],[2231,737],[2257,748],[2265,767],[2262,797],[2252,812],[2236,815],[2173,815],[2115,806],[2047,802],[1963,805],[1889,813],[1805,819],[1750,821],[1746,825]]
];
const notes = document.getElementById("notes");
for (const s of strokes) {
  let d = `M${s[0]}`;
  for (let i = 1; i < s.length - 1; i++) {
    d += `Q${s[i]} ${(s[i][0] + s[i + 1][0]) / 2},${(s[i][1] + s[i + 1][1]) / 2}`;
  }
  add(notes, "path", { d: d + `L${s[s.length - 1]}` });
}
add(notes, "path", { d: "M1212 708L1107 756L1200 791" });
```
